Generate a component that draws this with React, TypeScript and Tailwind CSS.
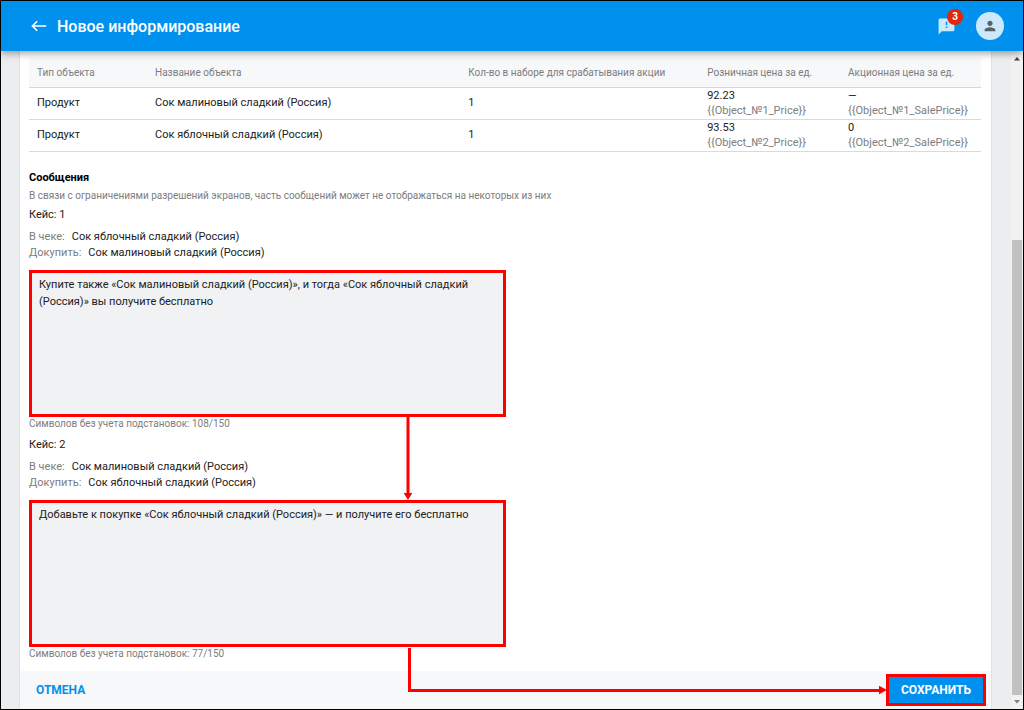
import React from "react";
import { MdFeedback, MdPerson } from "react-icons/md";

type Row = {
  type: string;
  name: string;
  count: string;
  price: string;
  priceKey: string;
  sale: string;
  saleKey: string;
};

type Case = {
  id: number;
  inReceipt: string;
  toBuy: string;
  message: string;
  used: number;
};

const rows: Row[] = [
  {
    type: "Продукт",
    name: "Сок малиновый сладкий (Россия)",
    count: "1",
    price: "92.23",
    priceKey: "{{Object_№1_Price}}",
    sale: "—",
    saleKey: "{{Object_№1_SalePrice}}",
  },
  {
    type: "Продукт",
    name: "Сок яблочный сладкий (Россия)",
    count: "1",
    price: "93.53",
    priceKey: "{{Object_№2_Price}}",
    sale: "0",
    saleKey: "{{Object_№2_SalePrice}}",
  },
];

const cases: Case[] = [
  {
    id: 1,
    inReceipt: "Сок яблочный сладкий (Россия)",
    toBuy: "Сок малиновый сладкий (Россия)",
    message:
      "Купите также «Сок малиновый сладкий (Россия)», и тогда «Сок яблочный сладкий (Россия)» вы получите бесплатно",
    used: 108,
  },
  {
    id: 2,
    inReceipt: "Сок малиновый сладкий (Россия)",
    toBuy: "Сок яблочный сладкий (Россия)",
    message: "Добавьте к покупке «Сок яблочный сладкий (Россия)» — и получите его бесплатно",
    used: 77,
  },
];

function Header() {
  return (
    <header className="relative z-10 flex h-[50px] shrink-0 items-center bg-[#0091ee] pr-[19px] pl-[30px] text-white shadow-[0_2px_8px_rgba(0,0,0,0.4)]">
      <button type="button" aria-label="Назад" className="h-4 w-4">
        <svg viewBox="0 0 16 16" className="h-4 w-4" fill="none" stroke="currentColor" strokeWidth="1.6">
          <path d="M15.2 8H1.6M6.2 3.2L1.4 8l4.8 4.8" />
        </svg>
      </button>
      <h1 className="ml-[10px] flex-1 pt-px text-base font-medium">Новое информирование</h1>
      <button type="button" aria-label="Уведомления" className="relative text-[#cce9fc]">
        <MdFeedback className="h-[19px] w-[19px]" />
        <span className="absolute -top-2 left-[10px] flex h-4 w-4 items-center justify-center rounded-full bg-[#e0260b] text-[10px] font-bold text-white">
          3
        </span>
      </button>
      <button
        type="button"
        aria-label="Профиль"
        className="ml-5 flex h-7 w-7 items-center justify-center rounded-full bg-[#cce9fc] text-[#5a6268]"
      >
        <MdPerson className="h-4 w-4" />
      </button>
    </header>
  );
}

function ObjectsTable() {
  return (
    <table className="w-full table-fixed border-collapse text-left">
      <colgroup>
        <col className="w-[12.4%]" />
        <col className="w-[32.9%]" />
        <col className="w-[25.1%]" />
        <col className="w-[14.8%]" />
        <col />
      </colgroup>
      <thead className="bg-[#f6f8fa] text-[10px] text-[#7d7d7d]">
        <tr className="h-[30px] border-b border-[#d5d8db]">
          <th className="pt-[3px] pl-2 font-normal">Тип объекта</th>
          <th className="pt-[3px] pl-2 font-normal">Название объекта</th>
          <th className="pt-[3px] pl-2 font-normal">Кол-во в наборе для срабатывания акции</th>
          <th className="pt-[3px] pl-2 font-normal">Розничная цена за ед.</th>
          <th className="pt-[3px] pl-2 font-normal">Акционная цена за ед.</th>
        </tr>
      </thead>
      <tbody>
        {rows.map((row) => (
          <tr key={row.priceKey} className="h-8 border-b border-[#d9dadb]">
            <td className="pl-2">{row.type}</td>
            <td className="pl-2">{row.name}</td>
            <td className="pl-2">{row.count}</td>
            <td className="pl-2 leading-[15px]">
              {row.price}
              <div className="text-[#7d7d7d]">{row.priceKey}</div>
            </td>
            <td className="pl-2 leading-[15px]">
              {row.sale}
              <div className="text-[#7d7d7d]">{row.saleKey}</div>
            </td>
          </tr>
        ))}
      </tbody>
    </table>
  );
}

function MessageCase({ item, linked }: { item: Case; linked: boolean }) {
  const fieldId = `message-${item.id}`;
  return (
    <section className="relative">
      <label htmlFor={fieldId} className="block">
        Кейс: {item.id}
      </label>
      <p className="mt-[6px]">
        <span className="mr-[7px] text-[#7d7d7d]">В чеке:</span>
        {item.inReceipt}
      </p>
      <p>
        <span className="mr-[7px] text-[#7d7d7d]">Докупить:</span>
        {item.toBuy}
      </p>
      <textarea
        id={fieldId}
        defaultValue={item.message}
        className="mt-[9px] block h-[147px] w-[477px] max-w-full resize-none border-3 border-[#ff0000] bg-[#f0f2f4] px-[7px] py-[3px] leading-[17px] outline-none"
      />
      <p className="text-[10px] leading-[14px] text-[#7d7d7d]">Символов без учета подстановок: {item.used}/150</p>
      {linked && (
        <svg viewBox="0 0 10 84" className="absolute top-[209px] left-[374px] h-[84px] w-[10px]" fill="#ff0000">
          <path d="M3.5 0h3v77h2.8L5 84 .7 77h2.8z" />
        </svg>
      )}
    </section>
  );
}

function Scrollbar() {
  return (
    <div aria-hidden="true" className="flex w-3 flex-col items-center bg-[#f1f1f1]">
      <svg viewBox="0 0 12 16" className="h-4 w-3" fill="#404040">
        <path d="M3 9.5h6L6 6z" />
      </svg>
      <div className="grow-[173] basis-0" />
      <div className="w-[10px] grow-[455] basis-0 bg-[#c1c1c1]" />
      <svg viewBox="0 0 12 14" className="h-[14px] w-3" fill="#808080">
        <path d="M3 5h6L6 8.5z" />
      </svg>
    </div>
  );
}

export default function App() {
  return (
    <div className="flex min-h-screen flex-col border border-black bg-[#ebedef] font-['Roboto','Liberation_Sans',sans-serif] text-[11px] leading-4 text-[#212121]">
      <Header />
      <div className="flex flex-1">
        <main className="relative mr-[19px] ml-[18px] flex min-w-0 flex-1 flex-col border-x border-[#dfe1e4] bg-white">
          <div className="flex-1 pt-[6px] pr-[10px] pl-[9px]">
            <ObjectsTable />
            <h2 className="mt-[18px] font-bold text-black">Сообщения</h2>
            <p className="mt-[2px] text-[10px] text-[#7d7d7d]">
              В связи с ограничениями разрешений экранов, часть сообщений может не отображаться на некоторых из них
            </p>
            <div className="mt-[3px] flex flex-col gap-[6px]">
              {cases.map((item) => (
                <MessageCase key={item.id} item={item} linked={item.id === 1} />
              ))}
            </div>
          </div>
          <footer className="mt-[9px] flex h-[38px] shrink-0 items-center justify-between bg-[#f6f8fa] pr-[5px] pl-4 text-[12px] font-bold">
            <button type="button" className="text-[#0091ee]">
              ОТМЕНА
            </button>
            <button
              type="button"
              className="h-8 w-[100px] border-3 border-[#ff0000] bg-[#0091ee] text-white"
            >
              СОХРАНИТЬ
            </button>
          </footer>
          <div
            aria-hidden="true"
            className="pointer-events-none absolute right-[111px] bottom-[17px] left-[388px] h-[44px] border-b-3 border-l-3 border-[#ff0000]"
          />
          <svg
            viewBox="0 0 8 10"
            className="absolute right-[104px] bottom-[14px] h-[10px] w-2"
            fill="#ff0000"
          >
            <path d="M0 .7L8 5 0 9.3z" />
          </svg>
        </main>
        <Scrollbar />
      </div>
    </div>
  );
}
